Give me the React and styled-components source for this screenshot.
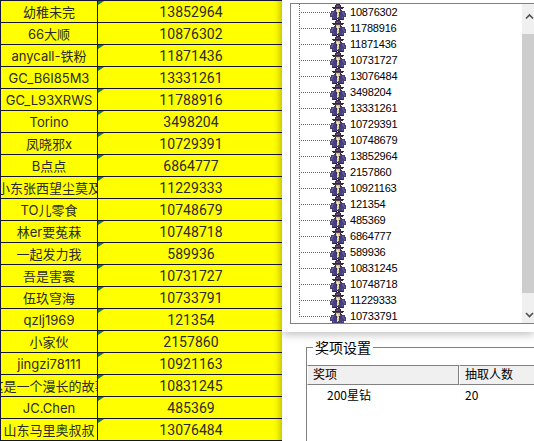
import styled, { createGlobalStyle } from 'styled-components';

const players = [
  ['幼稚未完', '13852964', true],
  ['66大顺', '10876302', false],
  ['anycall-铁粉', '11871436', true],
  ['GC_B6I85M3', '13331261', true],
  ['GC_L93XRWS', '11788916', true],
  ['Torino', '3498204', true],
  ['凤晓邪x', '10729391', true],
  ['B点点', '6864777', true],
  ['小东张西望尘莫及', '11229333', true],
  ['TO儿零食', '10748679', false],
  ['林er要菟菻', '10748718', true],
  ['一起发力我', '589936', true],
  ['吾是害寰', '10731727', true],
  ['伍玖穹海', '10733791', true],
  ['qzlj1969', '121354', true],
  ['小家伙', '2157860', true],
  ['jingzi78111', '10921163', true],
  ['这是一个漫长的故事', '10831245', true],
  ['JC.Chen', '485369', true],
  ['山东马里奥叔叔', '13076484', true],
];

const treeIds = [
  '10876302', '11788916', '11871436', '10731727', '13076484',
  '3498204', '13331261', '10729391', '10748679', '13852964',
  '2157860', '10921163', '121354', '485369', '6864777',
  '589936', '10831245', '10748718', '11229333', '10733791',
];

const palette = {
  D: '#33263f',
  H: '#54405f',
  L: '#7a6a86',
  F: '#d9c88c',
  W: '#f0ead0',
  N: '#453f7c',
  M: '#655e9e',
  K: '#2c2858',
};

const spriteRows = [
  '......DDDD......',
  '.....DHHHHD.....',
  '.....DHLHHD.....',
  '..DDDDDDDDDDDD..',
  '...DDHHHHHHDD...',
  '.....DFFFFD.....',
  '....NKFWFFKN....',
  '.NNNNNFWWFNNNNN.',
  '.NMMNNKFFKNNMMN.',
  'NNMNNNKFWKNNNMNN',
  'NMMNNNNWFNNNNMMN',
  'NMNNNNNFFNNNNNMN',
  'NNNNNNNWFNNNNNNN',
  '..NMNNNFNNNNMN..',
  '..NNNNNKNNNNNN..',
  '..KKKKK.KKKKKK..',
];

const GlobalStyle = createGlobalStyle`
  html, body {
    margin: 0;
    padding: 0;
    background: #fff;
    overflow: hidden;
  }
`;

const Page = styled.div`
  display: flex;
  width: 534px;
  height: 441px;
  overflow: hidden;
  background: #fff;
`;

const Sheet = styled.div`
  flex: 0 0 282px;
  height: 441px;
  box-sizing: border-box;
  background: #ffff00;
  border-top: 1px solid #14143c;
  border-left: 1px solid #14143c;
  box-shadow: inset -7px 0 6px -5px rgba(60, 60, 0, 0.35);
`;

const SheetRow = styled.div`
  display: grid;
  grid-template-columns: 97px 1fr;
  height: 22px;
  box-sizing: border-box;
  border-bottom: 1px solid #14143c;
  color: #2a2a2a;
`;

const NameCell = styled.div`
  display: flex;
  justify-content: center;
  align-items: center;
  overflow: hidden;
  white-space: nowrap;
  border-right: 1px solid #14143c;
  font: 13px Inter, 'Noto Sans CJK SC', sans-serif;
`;

const IdCell = styled.div`
  position: relative;
  display: flex;
  justify-content: center;
  align-items: center;
  padding-left: 2px;
  font: 14px Roboto, 'Noto Sans', sans-serif;
  letter-spacing: 0.05px;

  &::before {
    content: '';
    display: ${(p) => (p.$flag ? 'block' : 'none')};
    position: absolute;
    left: 0;
    top: 0;
    border-style: solid;
    border-width: 4px 6px 0 0;
    border-color: #1b7a3c transparent transparent transparent;
  }
`;

const Side = styled.div`
  flex: 1;
  min-width: 0;
  overflow: hidden;
`;

const TreePanel = styled.div`
  height: 332px;
  box-sizing: border-box;
  padding: 3px 0 0 8px;
  background: #fff;
  box-shadow: 0 2px 9px rgba(0, 0, 0, 0.28);
  position: relative;
`;

const TreeBox = styled.div`
  display: flex;
  height: 321px;
  width: 260px;
  box-sizing: border-box;
  border: 1px solid #808080;
  background: #fff;
`;

const TreeList = styled.div`
  flex: 0 0 231px;
  overflow: hidden;
`;

const TreeRow = styled.div`
  display: flex;
  align-items: center;
  height: 16px;
  padding-left: 8px;
`;

const Connector = styled.span`
  flex: 0 0 31px;
  align-self: flex-start;
  height: ${(p) => (p.$last ? '9px' : '16px')};
  background-image:
    repeating-linear-gradient(to bottom, #666 0 1px, transparent 1px 2px),
    repeating-linear-gradient(to right, #666 0 1px, transparent 1px 2px);
  background-size: 1px 100%, 100% 1px;
  background-position: 0 0, 0 8px;
  background-repeat: no-repeat;
`;

const Sprite = styled.svg`
  flex: 0 0 16px;
  width: 16px;
  height: 16px;
  shape-rendering: crispEdges;
`;

const TreeLabel = styled.span`
  margin-left: 4px;
  font: 11px 'Liberation Sans', Arial, sans-serif;
  letter-spacing: -0.2px;
  color: #000;
`;

const ScrollBar = styled.div`
  flex: 0 0 14px;
  display: flex;
  flex-direction: column;
  align-items: center;
  background: #f0f0f0;
`;

const ScrollArrow = styled.svg`
  flex: 0 0 30px;
  width: 9px;
  height: 30px;
`;

const ScrollThumb = styled.div`
  flex: 1;
  align-self: stretch;
  background: #cdcdcd;
`;

const PrizeBox = styled.fieldset`
  margin: 7px 0 0 24px;
  padding: 0;
  width: 260px;
  height: 140px;
  box-sizing: border-box;
  border: 1px solid #808080;
  border-right: none;
  border-bottom: none;
  font: 12px 'Noto Sans CJK SC', sans-serif;
  color: #000;
`;

const PrizeLegend = styled.legend`
  margin-left: 6px;
  padding: 0 2px;
  font-size: 14px;
  line-height: 16px;
`;

const Columns = styled.div`
  display: grid;
  grid-template-columns: 152px 1fr;
  margin-top: 10px;
`;

const HeadCell = styled.div`
  height: 20px;
  box-sizing: border-box;
  padding-left: 5px;
  line-height: 16px;
  background: #f0f0f0;
  border-top: 1px solid #808080;
  border-left: 1px solid #fff;
  border-right: 1px solid #808080;
  border-bottom: 1px solid #808080;
`;

const PrizeRow = styled.div`
  display: grid;
  grid-template-columns: 152px 1fr;
  height: 20px;
  align-items: center;
  line-height: 16px;
`;

const PrizeName = styled.span`
  padding-left: 20px;
`;

const PrizeCount = styled.span`
  padding-left: 6px;
`;

const SpriteIcon = () => (
  <Sprite viewBox='0 0 16 16'>
    {spriteRows.flatMap((row, y) =>
      [...row].map((c, x) =>
        c === '.' ? null : <rect key={`${x}-${y}`} x={x} y={y} width='1' height='1' fill={palette[c]} />
      )
    )}
  </Sprite>
);

const App = () => {
  return (
    <Page>
      <GlobalStyle />
      <Sheet>
        {players.map(([name, id, flag]) => (
          <SheetRow key={id}>
            <NameCell>{name}</NameCell>
            <IdCell $flag={flag}>{id}</IdCell>
          </SheetRow>
        ))}
      </Sheet>
      <Side>
        <TreePanel>
          <TreeBox>
            <TreeList>
              {treeIds.map((id, i) => (
                <TreeRow key={id}>
                  <Connector $last={i === treeIds.length - 1} />
                  <SpriteIcon />
                  <TreeLabel>{id}</TreeLabel>
                </TreeRow>
              ))}
            </TreeList>
            <ScrollBar>
              <ScrollArrow viewBox='0 0 9 30'>
                <path d='M1 14.5 L4.5 11 L8 14.5' fill='none' stroke='#505050' strokeWidth='1.6' />
              </ScrollArrow>
              <ScrollThumb />
              <ScrollArrow viewBox='0 0 9 30'>
                <path d='M1 20 L4.5 23.5 L8 20' fill='none' stroke='#505050' strokeWidth='1.6' />
              </ScrollArrow>
            </ScrollBar>
          </TreeBox>
        </TreePanel>
        <PrizeBox>
          <PrizeLegend>奖项设置</PrizeLegend>
          <Columns>
            <HeadCell>奖项</HeadCell>
            <HeadCell>抽取人数</HeadCell>
          </Columns>
          <PrizeRow>
            <PrizeName>200星钻</PrizeName>
            <PrizeCount>20</PrizeCount>
          </PrizeRow>
        </PrizeBox>
      </Side>
    </Page>
  );
};

export default App;
